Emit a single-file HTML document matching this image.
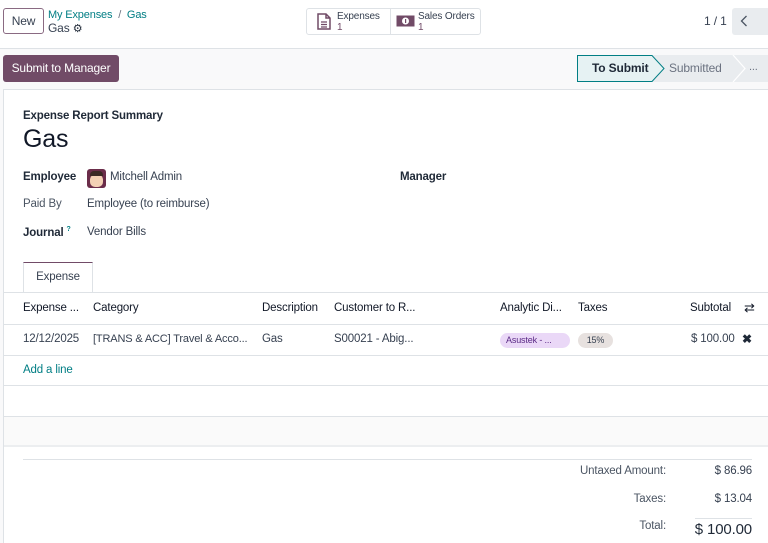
<!DOCTYPE html>
<html><head><meta charset="utf-8"><style>
*{box-sizing:border-box;margin:0;padding:0}
body{width:768px;height:543px;overflow:hidden;font-family:"Liberation Sans",sans-serif;font-size:11.5px;letter-spacing:-0.15px;color:#374151;background:#fff;position:relative}
.a{position:absolute;white-space:nowrap}
.b{font-weight:bold;color:#1f2937}
.teal{color:#017e84}
</style></head><body>
<!-- top bar -->
<div class="a" style="left:3px;top:8px;width:41px;height:26px;border:1px solid #8a6a82;border-radius:3px;color:#374151;font-size:12px;line-height:24px;text-align:center">New</div>
<div class="a teal" style="left:48px;top:9px;font-size:11px">My Expenses &nbsp;<span style="color:#6b7280">/</span>&nbsp; Gas</div>
<div class="a" style="left:48px;top:21px;font-size:12px;color:#374151">Gas <span style="font-size:11px;color:#1f2937">⚙</span></div>
<div class="a" style="left:306px;top:8px;width:175px;height:27px;border:1px solid #dee2e6;border-radius:3px"></div>
<div class="a" style="left:390px;top:9px;width:1px;height:25px;background:#dee2e6"></div>
<svg class="a" style="left:317px;top:13px" width="14" height="17" viewBox="0 0 14 17"><path d="M1 1h8l4 4v11H1z M9 1v4h4" fill="none" stroke="#714b67" stroke-width="1.5"/><path d="M4 9h6M4 11.5h6M4 14h6" stroke="#714b67" stroke-width="1.2"/></svg>
<div class="a" style="left:337px;top:11px;font-size:10px;line-height:11px">Expenses<br><span style="color:#714b67">1</span></div>
<svg class="a" style="left:396px;top:15px" width="19" height="12" viewBox="0 0 19 12"><rect x="0.5" y="0.5" width="18" height="11" fill="#714b67"/><circle cx="9.5" cy="6" r="3.5" fill="#fff"/><rect x="9" y="4" width="1.2" height="4" fill="#714b67"/></svg>
<div class="a" style="left:418px;top:11px;font-size:10px;line-height:11px">Sales Orders<br><span style="color:#714b67">1</span></div>
<div class="a" style="left:704px;top:14px;font-size:12px">1 / 1</div>
<div class="a" style="left:732px;top:8px;width:36px;height:27px;background:#e9ecef;border-radius:3px 0 0 3px"></div>
<svg class="a" style="left:740px;top:15px" width="8" height="12" viewBox="0 0 8 12"><path d="M6.5 1L1.5 6L6.5 11" fill="none" stroke="#4b5563" stroke-width="1.3"/></svg>
<div class="a" style="left:0;top:48px;width:768px;height:495px;background:#f9f9fa;border-top:1px solid #dee2e6"></div>
<div class="a" style="left:3px;top:55px;width:116px;height:27px;background:#714b67;border-radius:3px;color:#fff;font-size:12px;line-height:27px;text-align:center">Submit to Manager</div>
<!-- status -->
<svg class="a" style="left:577px;top:55px" width="191" height="27" viewBox="0 0 191 27"><rect x="0" y="0" width="191" height="27" fill="#e9ecef"/><path d="M0.5 0.5H75L87 13.5L75 26.5H0.5Z" fill="#e6f2f3" stroke="#017e84"/><path d="M156 0L168 13.5L156 27" fill="none" stroke="#fff" stroke-width="1.2"/></svg>
<div class="a b" style="left:592px;top:61px;font-size:12px">To Submit</div>
<div class="a" style="left:669px;top:61px;font-size:12px;color:#6b7280">Submitted</div>
<div class="a" style="left:749px;top:61px;font-size:11px;color:#6b7280">...</div>
<!-- sheet -->
<div class="a" style="left:3px;top:89px;width:765px;height:454px;background:#fff;border-left:1px solid #dee2e6;border-top:1px solid #dee2e6"></div>
<div class="a b" style="left:23px;top:110px;font-size:11.5px">Expense Report Summary</div>
<div class="a" style="left:23px;top:125px;font-size:25px;color:#111827">Gas</div>
<div class="a b" style="left:23px;top:171px">Employee</div>
<div class="a" style="left:87px;top:169px;width:19px;height:19px;border-radius:3px;background:#6b2d4a"></div>
<div class="a" style="left:90px;top:174px;width:13px;height:13px;border-radius:6px 6px 5px 5px;background:#f3d1b5"></div>
<div class="a" style="left:90px;top:171px;width:13px;height:5px;border-radius:4px 4px 0 0;background:#3b2a25"></div>
<div class="a" style="left:110px;top:171px">Mitchell Admin</div>
<div class="a b" style="left:400px;top:171px">Manager</div>
<div class="a" style="left:23px;top:198px;color:#4b5563">Paid By</div>
<div class="a" style="left:87px;top:198px">Employee (to reimburse)</div>
<div class="a b" style="left:23px;top:226px">Journal <sup style="font-size:7px;color:#017e84">?</sup></div>
<div class="a" style="left:87px;top:226px">Vendor Bills</div>
<div class="a" style="left:23px;top:262px;width:70px;height:31px;border:1px solid #dee2e6;border-top:1px solid #714b67;border-bottom:none;background:#fff;text-align:center;line-height:29px">Expense</div>
<div class="a" style="left:3px;top:292px;width:765px;height:1px;background:#dee2e6"></div>
<!-- table -->
<div class="a" style="left:4px;top:324px;width:764px;height:1px;background:#dee2e6"></div>
<div class="a" style="left:4px;top:355px;width:764px;height:1px;background:#dee2e6"></div>
<div class="a" style="left:4px;top:385px;width:764px;height:1px;background:#dee2e6"></div>
<div class="a" style="left:4px;top:416px;width:764px;height:31px;background:#fafafa;border-top:1px solid #dee2e6;border-bottom:2px solid #eceef0"></div>
<div class="a" style="left:23px;top:302px;color:#111827">Expense ...</div>
<div class="a" style="left:93px;top:302px;color:#111827">Category</div>
<div class="a" style="left:262px;top:302px;color:#111827">Description</div>
<div class="a" style="left:334px;top:302px;color:#111827">Customer to R...</div>
<div class="a" style="left:500px;top:302px;color:#111827">Analytic Di...</div>
<div class="a" style="left:578px;top:302px;color:#111827">Taxes</div>
<div class="a" style="left:690px;top:302px;color:#111827">Subtotal</div>
<div class="a" style="left:744px;top:300px;font-size:13px;color:#111827">⇄</div>
<div class="a" style="left:23px;top:333px">12/12/2025</div>
<div class="a" style="left:93px;top:333px;font-size:11px">[TRANS &amp; ACC] Travel &amp; Acco...</div>
<div class="a" style="left:262px;top:333px">Gas</div>
<div class="a" style="left:334px;top:333px">S00021 - Abig...</div>
<div class="a" style="left:500px;top:333px;width:70px;height:15px;border-radius:8px;background:#ead8f7;color:#5b2a86;font-size:9px;line-height:15px;padding-left:6px">Asustek - ...</div>
<div class="a" style="left:578px;top:333px;width:35px;height:15px;border-radius:8px;background:#e7e1df;font-size:9px;line-height:15px;text-align:center">15%</div>
<div class="a" style="left:691px;top:333px">$ 100.00</div>
<div class="a b" style="left:742px;top:332px;font-size:12px">✖</div>
<div class="a teal" style="left:23px;top:364px">Add a line</div>
<!-- totals -->
<div class="a" style="left:23px;top:459px;width:729px;height:1px;background:#dee2e6"></div>
<div class="a" style="left:560px;top:465px;width:106px;text-align:right;color:#4b5563">Untaxed Amount:</div>
<div class="a" style="left:680px;top:465px;width:72px;text-align:right">$ 86.96</div>
<div class="a" style="left:560px;top:493px;width:106px;text-align:right;color:#4b5563">Taxes:</div>
<div class="a" style="left:680px;top:493px;width:72px;text-align:right">$ 13.04</div>
<div class="a" style="left:695px;top:518px;width:57px;height:1px;background:#dee2e6"></div>
<div class="a" style="left:560px;top:520px;width:106px;text-align:right;color:#4b5563">Total:</div>
<div class="a" style="left:670px;top:521px;width:82px;text-align:right;font-size:15px;color:#1f2937">$ 100.00</div>
</body></html>
